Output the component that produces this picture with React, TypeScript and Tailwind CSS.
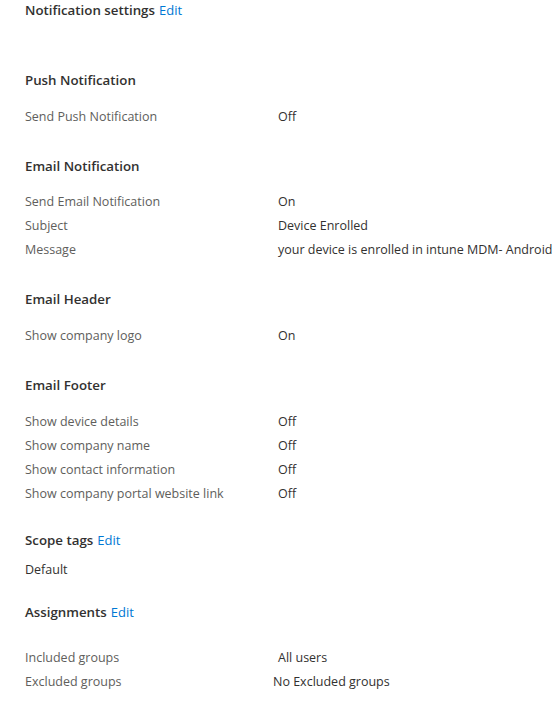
import React from 'react'

const font = { fontFamily: '"Open Sans", "Noto Sans", sans-serif' }

type Row = { label: string; value: string; valueClass?: string }

function Heading({ title, edit, className = '' }: { title: string; edit?: boolean; className?: string }) {
  return (
    <div className={`flex items-baseline h-[20px] leading-[20px] ${className}`}>
      <span className="text-[13.3px] font-semibold text-[#323130]">{title}</span>
      {edit && <span className="ml-[4px] text-[13px] text-[#0078d4]">Edit</span>}
    </div>
  )
}

function Rows({ rows, className = '' }: { rows: Row[]; className?: string }) {
  return (
    <div className={className}>
      {rows.map((r) => (
        <div key={r.label} className="flex h-[24px] leading-[24px] text-[12.5px]">
          <span className="w-[253px] shrink-0 text-[#605e5c]">{r.label}</span>
          <span className={`whitespace-nowrap text-[#323130] ${r.valueClass ?? ''}`}>{r.value}</span>
        </div>
      ))}
    </div>
  )
}

export default function App() {
  return (
    <div className="w-[556px] h-[701px] bg-white overflow-hidden pl-[25px]" style={font}>
      <Heading title="Notification settings" edit />

      <Heading title="Push Notification" className="mt-[50px]" />
      <Rows className="mt-[15px]" rows={[{ label: 'Send Push Notification', value: 'Off' }]} />

      <Heading title="Email Notification" className="mt-[27px]" />
      <Rows
        className="mt-[14px]"
        rows={[
          { label: 'Send Email Notification', value: 'On' },
          { label: 'Subject', value: 'Device Enrolled' },
          { label: 'Message', value: 'your device is enrolled in intune MDM- Android' },
        ]}
      />

      <Heading title="Email Header" className="mt-[27px]" />
      <Rows className="mt-[15px]" rows={[{ label: 'Show company logo', value: 'On' }]} />

      <Heading title="Email Footer" className="mt-[27px]" />
      <Rows
        className="mt-[15px]"
        rows={[
          { label: 'Show device details', value: 'Off' },
          { label: 'Show company name', value: 'Off' },
          { label: 'Show contact information', value: 'Off' },
          { label: 'Show company portal website link', value: 'Off' },
        ]}
      />

      <Heading title="Scope tags" edit className="mt-[24px]" />
      <div className="mt-[8px] h-[24px] leading-[24px] text-[12.5px] text-[#323130]">Default</div>

      <Heading title="Assignments" edit className="mt-[20px]" />
      <Rows
        className="mt-[24px]"
        rows={[
          { label: 'Included groups', value: 'All users' },
          { label: 'Excluded groups', value: 'No Excluded groups', valueClass: '-ml-[5px]' },
        ]}
      />
    </div>
  )
}
